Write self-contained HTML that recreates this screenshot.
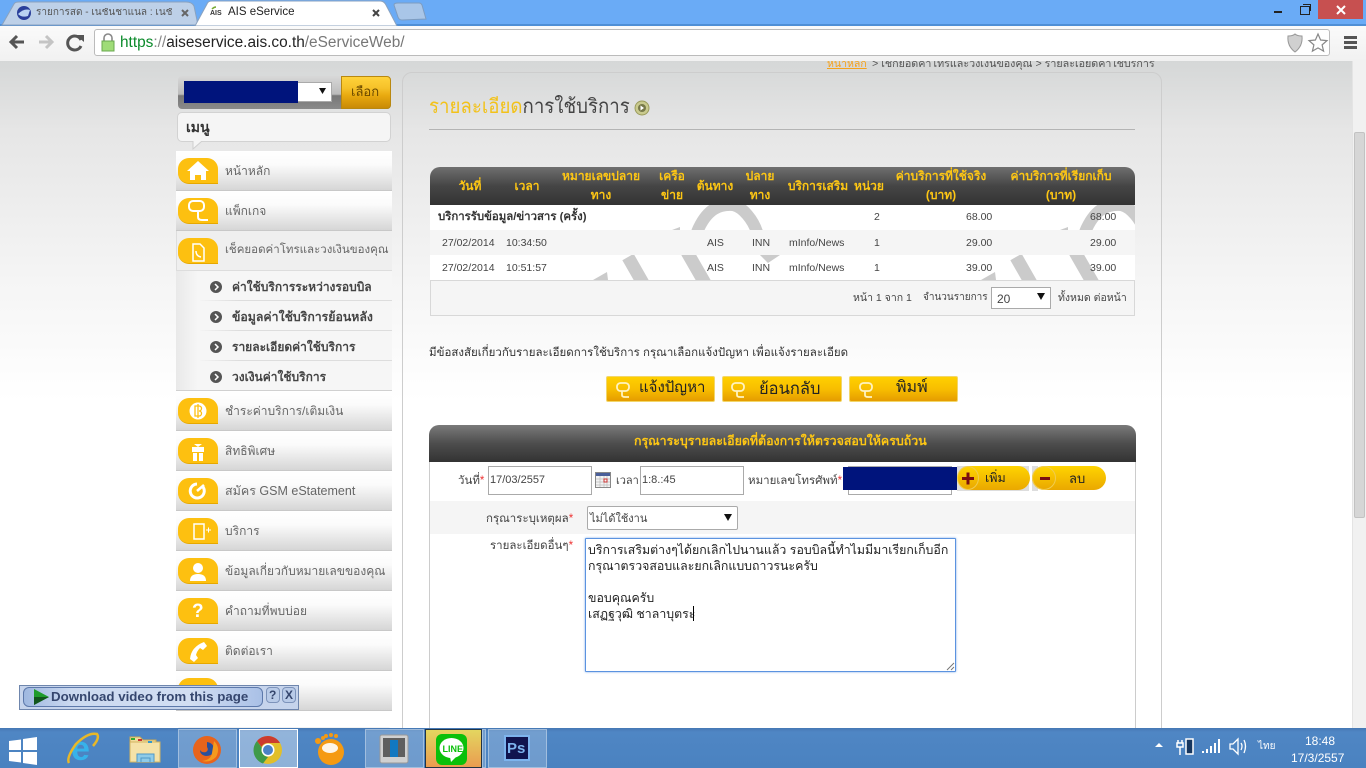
<!DOCTYPE html>
<html lang="th"><head><meta charset="utf-8"><title>AIS eService</title>
<style>
html,body{margin:0;padding:0;width:1366px;height:768px;overflow:hidden;background:#fff}
body{font-family:"Liberation Sans","Noto Sans CJK SC",sans-serif;position:relative;font-size:11px;color:#333}
div,span.a,svg.a{position:absolute}
.t{position:absolute;white-space:nowrap;line-height:1}
.mi{left:176px;width:216px;height:40px;background:linear-gradient(#fff 0,#fbfbfb 35%,#d6d6d6 100%);border-bottom:1px solid #c8c8c8;box-sizing:border-box}
.bub{left:178px;width:40px;height:26px;background:#fdc010;border-radius:11px 11px 0 11px;border-bottom:1px solid #e6a800;box-sizing:border-box}
.ml{left:225px;font-size:12px;color:#666}
.sl{left:232px;font-size:12px;color:#444;font-weight:bold}
.bul{left:210px;width:12px;height:12px;border-radius:50%;background:#555;color:#fff}
.sep{left:200px;width:192px;height:1px;background:linear-gradient(90deg,#f4f4f4,#ddd 20%,#ddd)}
.th{color:#fdc614;font-weight:bold;font-size:12px;text-align:center;line-height:19px;white-space:normal}
.td{font-size:10.5px;color:#444}
.btn{background:linear-gradient(#ffd000,#f8be00 50%,#e59c00);border:1px solid #f2d66a;box-sizing:border-box;border-radius:2px;color:#222;font-size:14px}
.inp{background:#fff;border:1px solid #aaa;box-sizing:border-box}
.tbb{top:729px;height:39px;width:59px;box-sizing:border-box;border:1px solid rgba(255,255,255,.35);background:rgba(255,255,255,.2)}
</style></head><body>

<!-- Chrome frame -->
<div style="left:0;top:0;width:1366px;height:26px;background:#6aabf6"></div>
<div style="left:0;top:24px;width:1366px;height:2px;background:#4f8fd6"></div>
<svg class="a" style="left:0;top:0" width="440" height="27">
<path d="M2 25 L14 4 Q15 2 19 2 L186 2 Q192 2 194 6 L198 25Z" fill="#bdd0e8" stroke="#8aa2bf"/>
<path d="M195 26 L207 4 Q208 1 212 1 L380 1 Q384 1 386 5 L397 26Z" fill="#fff" stroke="#8aa2bf"/>
<path d="M394 5 Q394 3 398 3 L419 3 Q421 3 422 5 L426 19 L402 20 Q399 20 398 17Z" fill="#a9c6e8" stroke="#7d9cc0"/>
<circle cx="24" cy="13" r="7" fill="#2a3f9a"/><path d="M18 14 Q24 8 30 10 L28 16 Q22 18 18 14Z" fill="#b9d2f2"/>
<path d="M182 10 l6 6 m0 -6 l-6 6" stroke="#666" stroke-width="2"/>
<path d="M373 10 l6 6 m0 -6 l-6 6" stroke="#444" stroke-width="2"/>
<path d="M212 9 q2 -2 4 -2" stroke="#7a3" stroke-width="1.5" fill="none"/>
</svg>
<span class="t" style="left:36px;top:8px;font-size:10px;color:#555;width:138px;overflow:hidden">รายการสด - เนชั่นชาแนล : เนชั่</span>
<span class="t" style="left:210px;top:10px;font-size:7px;font-weight:bold;color:#333">AIS</span>
<span class="t" style="left:228px;top:7px;font-size:11.500px;color:#222">AIS eService</span>

<div style="left:0;top:26px;width:1366px;height:35px;background:linear-gradient(#fafafa,#f1f1f1);border-bottom:1px solid #a8a8a8"></div>
<svg class="a" style="left:0;top:26px" width="100" height="35">
<path d="M24 16 H12 M17 10 l-6 6 6 6" stroke="#555" stroke-width="3" fill="none"/>
<path d="M39 16 H51 M46 10 l6 6 -6 6" stroke="#c4c4c4" stroke-width="3" fill="none"/>
<path d="M81 14 A7 7 0 1 0 81 20" stroke="#555" stroke-width="3" fill="none"/><path d="M76 9 h8 v7z" fill="#555"/>
</svg>
<div style="left:94px;top:29px;width:1236px;height:27px;background:#fff;border:1px solid #bbb;border-radius:3px;box-sizing:border-box"></div>
<svg class="a" style="left:100px;top:33px" width="16" height="20"><path d="M4 8 V5 a4 4 0 0 1 8 0 v3" stroke="#888" stroke-width="1.6" fill="none"/><rect x="2" y="8" width="12" height="10" fill="#9fdc78" stroke="#6aa84f"/></svg>
<span class="t" style="left:120px;top:35px;font-size:15.400px"><span style="color:#0a8a2a">https</span><span style="color:#888">://</span><span style="color:#222">aiseservice.ais.co.th</span><span style="color:#777">/eServiceWeb/</span></span>
<svg class="a" style="left:1284px;top:32px" width="46" height="22">
<path d="M4 4 Q9 4 11 2 Q13 4 18 4 Q19 14 11 20 Q3 14 4 4Z" fill="#d0d0d0" stroke="#999"/>
<path d="M34 2 l2.6 6 6.400 .6 -4.900 4.300 1.500 6.300 -5.600 -3.300 -5.600 3.300 1.500 -6.300 -4.900 -4.300 6.400 -.6z" fill="#fff" stroke="#888" stroke-width="1.200"/>
</svg>
<div style="left:1344px;top:36px;width:13px;height:3px;background:#555"></div>
<div style="left:1344px;top:41px;width:13px;height:3px;background:#555"></div>
<div style="left:1344px;top:46px;width:13px;height:3px;background:#555"></div>
<div style="left:1274px;top:11px;width:8px;height:2px;background:#222"></div>
<div style="left:1300px;top:6px;width:8px;height:7px;border:1.5px solid #222;background:#6aabf6"></div>
<div style="left:1303px;top:4px;width:7px;height:6px;border:1.5px solid #222;border-bottom:0;border-left:0"></div>
<div style="left:1318px;top:0;width:45px;height:19px;background:#c75050"></div>
<svg class="a" style="left:1334px;top:4px" width="14" height="12"><path d="M3 2 l8 8 m0 -8 l-8 8" stroke="#fff" stroke-width="2"/></svg>

<!-- Page -->
<div style="left:0;top:61px;width:1352px;height:667px;background:linear-gradient(#d5d7d7 0,#e6e6e6 70px,#f5f5f5 220px,#fff 340px,#fff 100%)"></div>
<div style="left:1352px;top:61px;width:14px;height:667px;background:#f1f1f1;border-left:1px solid #e4e4e4;box-sizing:border-box"></div>
<div style="left:1354px;top:132px;width:11px;height:386px;background:#d6d6d6;border:1px solid #c2c2c2;box-sizing:border-box;border-radius:2px"></div>

<!-- Main panel -->
<div style="left:402px;top:72px;width:760px;height:670px;border:1px solid #cdcdcd;border-radius:10px;box-sizing:border-box"></div>
<div style="left:820px;top:61px;width:345px;height:10px;overflow:hidden">
<span class="t" style="left:7px;top:-2px;font-size:10.500px;color:#f5a21b;text-decoration:underline">หน้าหลัก</span>
<span class="t" style="left:52px;top:-2px;font-size:10.700px;color:#555">&gt;  เช็กยอดค่าโทรและวงเงินของคุณ  &gt;  รายละเอียดค่าใช้บริการ</span>
</div>
<span class="t" style="left:429px;top:97px;font-size:20px;color:#f2c21a;transform:scaleX(.933);transform-origin:0 0">รายละเอียด<span style="color:#444">การใช้บริการ</span></span>
<svg class="a" style="left:634px;top:100px" width="16" height="16"><circle cx="8" cy="8" r="7" fill="#c9ca8e" stroke="#999a5a"/><circle cx="8" cy="8" r="4" fill="#77794a"/><path d="M6.500 5.500 l3.500 2.500 -3.500 2.500z" fill="#fff"/></svg>
<div style="left:429px;top:129px;width:706px;height:1px;background:#b4b4b4"></div>

<!-- Sidebar select -->
<div style="left:178px;top:76px;width:213px;height:33px;border-radius:4px;background:linear-gradient(#d8d8d8,#bbb 55%,#777 60%,#8a8a8a);box-sizing:border-box"></div>
<div style="left:184px;top:82px;width:148px;height:20px;background:#fff;border:1px solid #aaa;box-sizing:border-box"></div>
<div style="left:184px;top:81px;width:114px;height:22px;background:#00147c"></div>
<svg class="a" style="left:319px;top:88px" width="7" height="6"><path d="M0 0 H7 L3.500 6z" fill="#111"/></svg>
<div style="left:341px;top:76px;width:50px;height:33px;border-radius:0 4px 4px 0;background:linear-gradient(#ffd23a,#f6c22a 35%,#e8a90f 60%,#c98a06);border:1px solid #b98810;box-sizing:border-box"></div>
<span class="t" style="left:351px;top:85px;font-size:13px;color:#6b4a00">เลือก</span>
<div style="left:177px;top:112px;width:214px;height:30px;background:#f5f5f5;border:1px solid #d2d2d2;border-radius:5px;box-sizing:border-box"></div>
<svg class="a" style="left:192px;top:141px" width="12" height="9"><path d="M1 0 V8 L10 0" fill="#f5f5f5" stroke="#cfcfcf"/></svg>
<span class="t" style="left:186px;top:120px;font-size:14px;color:#333;font-weight:bold">เมนู</span>

<!-- Menu -->
<div class="mi" style="top:151px"></div><div class="mi" style="top:191px"></div>
<div class="mi" style="top:231px;background:#efefef;border-left:1px solid #ddd;border-bottom-color:#ddd"></div>
<div style="left:176px;top:271px;width:216px;height:120px;background:linear-gradient(90deg,#e9e9e9,#f6f6f6 22px);border-bottom:1px solid #d0d0d0;box-sizing:border-box"></div>
<div class="mi" style="top:391px"></div><div class="mi" style="top:431px"></div><div class="mi" style="top:471px"></div><div class="mi" style="top:511px"></div><div class="mi" style="top:551px"></div><div class="mi" style="top:591px"></div><div class="mi" style="top:631px"></div><div class="mi" style="top:671px"></div>
<div class="bub" style="top:158px"></div><div class="bub" style="top:198px"></div><div class="bub" style="top:238px"></div><div class="bub" style="top:398px"></div><div class="bub" style="top:438px"></div><div class="bub" style="top:478px"></div><div class="bub" style="top:518px"></div><div class="bub" style="top:558px"></div><div class="bub" style="top:598px"></div><div class="bub" style="top:638px"></div><div class="bub" style="top:678px"></div>
<span class="t ml" style="top:165px;font-size:12px">หน้าหลัก</span>
<span class="t ml" style="top:205px">แพ็กเกจ</span>
<span class="t ml" style="top:245px;font-size:11.500px">เช็คยอดค่าโทรและวงเงินของคุณ</span>
<span class="t ml" style="top:405px">ชำระค่าบริการ/เติมเงิน</span>
<span class="t ml" style="top:445px">สิทธิพิเศษ</span>
<span class="t ml" style="top:485px;font-size:12.500px">สมัคร GSM eStatement</span>
<span class="t ml" style="top:525px">บริการ</span>
<span class="t ml" style="top:565px">ข้อมูลเกี่ยวกับหมายเลขของคุณ</span>
<span class="t ml" style="top:605px">คำถามที่พบบ่อย</span>
<span class="t ml" style="top:645px">ติดต่อเรา</span>
<svg class="a" style="left:178px;top:151px" width="40" height="540" fill="#fff">
<path d="M20 10 L31 20 H28 V29 H23 V24 H17 V29 H12 V20 H9Z"/>
<rect x="11" y="50" width="15" height="10" rx="4" fill="none" stroke="#fff" stroke-width="2"/><path d="M20 60 v6 q0 3 4 3 h6" fill="none" stroke="#fff" stroke-width="2"/>
<path d="M15 93 h7 l4 4 v13 h-11z" fill="none" stroke="#fff" stroke-width="1.500"/><path d="M18 100 q0 5 5 6" fill="none" stroke="#fff" stroke-width="1.500"/>
<circle cx="20" cy="260" r="8.500"/><path d="M17 255 h4 a2.500 2.500 0 0 1 0 5 a2.500 2.500 0 0 1 0 5 h-4z M20 253v14" fill="none" stroke="#fdc010" stroke-width="1.300"/>
<path d="M14 296 h12 v5 h-12z M15 302 h4 v8 h-4z M21 302 h4 v8 h-4z M16 293 l4 3 4 -3"/>
<path d="M25 336 A7 7 0 1 1 19 333" fill="none" stroke="#fff" stroke-width="3"/><path d="M19 340 l7 -6" stroke="#fff" stroke-width="2.500"/>
<rect x="16" y="373" width="10" height="15" fill="none" stroke="#fff" stroke-width="1.500"/><path d="M28 379 h5 m-2.500 -2.500 v5" stroke="#fff"/>
<circle cx="20" cy="417" r="5"/><path d="M12 430 q0 -7 8 -7 q8 0 8 7z"/>
<text x="14" y="466" font-size="19" font-weight="bold" font-family="Liberation Sans">?</text>
<path d="M12 508 Q13 496 26 491 L29 495 L25 499 L22 497 Q19 500 18 504 L20 507 L16 511Z"/>
</svg>
<span class="t sl" style="top:281px">ค่าใช้บริการระหว่างรอบบิล</span>
<span class="t sl" style="top:311px;font-size:12.300px">ข้อมูลค่าใช้บริการย้อนหลัง</span>
<span class="t sl" style="top:341px">รายละเอียดค่าใช้บริการ</span>
<span class="t sl" style="top:371px">วงเงินค่าใช้บริการ</span>
<div class="bul" style="top:281px"></div><div class="bul" style="top:311px"></div><div class="bul" style="top:341px"></div><div class="bul" style="top:371px"></div>
<svg class="a" style="left:210px;top:281px" width="12" height="102"><path d="M5 3 l3 3 -3 3M5 33 l3 3 -3 3M5 63 l3 3 -3 3M5 93 l3 3 -3 3" fill="none" stroke="#fff" stroke-width="1.500"/></svg>
<div class="sep" style="top:300px"></div><div class="sep" style="top:330px"></div><div class="sep" style="top:360px"></div>
<div style="left:177px;top:727px;width:214px;height:3px;background:#f2f2f2;border-radius:6px 6px 0 0"></div>

<!-- Table -->
<div style="left:430px;top:167px;width:705px;height:38px;border-radius:10px 10px 0 0;background:linear-gradient(#6f6f6f,#454545 50%,#333)"></div>
<div style="left:430px;top:205px;width:705px;height:75px;background:#fff"></div>
<svg class="a" style="left:430px;top:205px" width="705" height="75">
<path d="M267 27 C277 3 290 -1 303 0 C313 2 323 15 327 27" fill="none" stroke="#cbcbcb" stroke-width="12"/>
<path d="M257 47 L276 80 M198 52 L214 80" fill="none" stroke="#cbcbcb" stroke-width="13"/>
<path d="M163 75 L177 67 L178 75Z M242 25 L250 22 L250 25Z M330 50 L350 50 L338 58Z" fill="#cbcbcb"/>
<g transform="translate(388 0)"><path d="M267 27 C277 3 290 -1 303 0 C313 2 323 15 327 27" fill="none" stroke="#cbcbcb" stroke-width="12"/>
<path d="M257 47 L276 80 M198 52 L214 80" fill="none" stroke="#cbcbcb" stroke-width="13"/>
<path d="M163 75 L177 67 L178 75Z M242 25 L250 22 L250 25Z" fill="#cbcbcb"/></g>
</svg>
<div style="left:430px;top:230px;width:705px;height:25px;background:#f5f5f5"></div>
<div style="left:430px;top:280px;width:705px;height:36px;background:#f5f5f5;border:1px solid #d8d8d8;box-sizing:border-box"></div>
<div class="t th" style="left:455px;top:177px;width:30px">วันที่</div>
<div class="t th" style="left:510px;top:177px;width:34px">เวลา</div>
<div class="t th" style="left:558px;top:167px;width:86px">หมายเลขปลาย<br>ทาง</div>
<div class="t th" style="left:655px;top:167px;width:34px">เครือ<br>ข่าย</div>
<div class="t th" style="left:692px;top:177px;width:46px">ต้นทาง</div>
<div class="t th" style="left:740px;top:167px;width:40px">ปลาย<br>ทาง</div>
<div class="t th" style="left:784px;top:177px;width:68px">บริการเสริม</div>
<div class="t th" style="left:851px;top:177px;width:36px">หน่วย</div>
<div class="t th" style="left:890px;top:167px;width:102px">ค่าบริการที่ใช้จริง<br>(บาท)</div>
<div class="t th" style="left:1000px;top:167px;width:122px">ค่าบริการที่เรียกเก็บ<br>(บาท)</div>
<span class="t td" style="left:438px;top:212px;font-weight:bold;color:#333;font-size:11.400px">บริการรับข้อมูล/ข่าวสาร (ครั้ง)</span>
<span class="t td" style="left:874px;top:212px">2</span><span class="t td" style="left:966px;top:212px">68.00</span><span class="t td" style="left:1090px;top:212px">68.00</span>
<span class="t td" style="left:442px;top:238px">27/02/2014</span><span class="t td" style="left:506px;top:238px">10:34:50</span><span class="t td" style="left:707px;top:238px">AIS</span><span class="t td" style="left:752px;top:238px">INN</span><span class="t td" style="left:789px;top:238px">mInfo/News</span><span class="t td" style="left:874px;top:238px">1</span><span class="t td" style="left:966px;top:238px">29.00</span><span class="t td" style="left:1090px;top:238px">29.00</span>
<span class="t td" style="left:442px;top:263px">27/02/2014</span><span class="t td" style="left:506px;top:263px">10:51:57</span><span class="t td" style="left:707px;top:263px">AIS</span><span class="t td" style="left:752px;top:263px">INN</span><span class="t td" style="left:789px;top:263px">mInfo/News</span><span class="t td" style="left:874px;top:263px">1</span><span class="t td" style="left:966px;top:263px">39.00</span><span class="t td" style="left:1090px;top:263px">39.00</span>
<span class="t td" style="left:853px;top:293px">หน้า 1 จาก 1</span>
<span class="t td" style="left:923px;top:293px;font-size:10px">จำนวนรายการ</span>
<div class="inp" style="left:991px;top:287px;width:60px;height:22px"></div>
<span class="t td" style="left:997px;top:293px;font-size:12px">20</span>
<svg class="a" style="left:1037px;top:293px" width="9" height="7"><path d="M0 0 H8 L4 7z" fill="#111"/></svg>
<span class="t td" style="left:1058px;top:293px">ทั้งหมด ต่อหน้า</span>

<span class="t" style="left:429px;top:348px;font-size:11.500px;color:#333">มีข้อสงสัยเกี่ยวกับรายละเอียดการใช้บริการ กรุณาเลือกแจ้งปัญหา เพื่อแจ้งรายละเอียด</span>

<!-- Buttons -->
<div class="btn" style="left:606px;top:376px;width:109px;height:26px"></div>
<div class="btn" style="left:722px;top:376px;width:120px;height:26px"></div>
<div class="btn" style="left:849px;top:376px;width:109px;height:26px"></div>
<div class="btn" style="left:735px;top:699px;width:93px;height:26px"></div>
<span class="t" style="left:639px;top:380px;font-size:15px;color:#222">แจ้งปัญหา</span>
<span class="t" style="left:759px;top:381px;font-size:16.500px;color:#222">ย้อนกลับ</span>
<span class="t" style="left:896px;top:380px;font-size:16px;color:#222">พิมพ์</span>
<span class="t" style="left:771px;top:704px;font-size:15px;color:#222">ตกลง</span>
<svg class="a" style="left:600px;top:370px" width="380" height="360" fill="none" stroke="#fff3c0" stroke-width="1.800">
<g><rect x="17" y="13" width="12" height="8" rx="3.500"/><path d="M22 21 v4 q0 2 3 2 h4"/></g>
<g transform="translate(115 0)"><rect x="17" y="13" width="12" height="8" rx="3.500"/><path d="M22 21 v4 q0 2 3 2 h4"/></g>
<g transform="translate(243 0)"><rect x="17" y="13" width="12" height="8" rx="3.500"/><path d="M22 21 v4 q0 2 3 2 h4"/></g>
<g transform="translate(128 323)"><rect x="17" y="13" width="12" height="8" rx="3.500"/><path d="M22 21 v4 q0 2 3 2 h4"/></g>
</svg>

<!-- Form -->
<div style="left:429px;top:425px;width:707px;height:37px;border-radius:10px 10px 0 0;background:linear-gradient(#7a7a7a,#4d4d4d 50%,#333)"></div>
<span class="t" style="left:634px;top:435px;font-size:12.400px;font-weight:bold;color:#fdc614">กรุณาระบุรายละเอียดที่ต้องการให้ตรวจสอบให้ครบถ้วน</span>
<div style="left:429px;top:462px;width:707px;height:266px;background:#fff;border-left:1px solid #ccc;border-right:1px solid #ccc;box-sizing:border-box"></div>
<div style="left:430px;top:501px;width:705px;height:33px;background:#f5f5f5"></div>
<span class="t" style="left:458px;top:476px;font-size:11.500px;color:#444">วันที่<span style="color:#e33">*</span></span>
<div class="inp" style="left:488px;top:466px;width:104px;height:29px"></div>
<span class="t td" style="left:490px;top:475px;font-size:11px">17/03/2557</span>
<svg class="a" style="left:595px;top:472px" width="16" height="16"><rect x=".5" y=".5" width="15" height="15" fill="#f4f4f4" stroke="#888"/><rect x="1" y="1" width="14" height="3" fill="#4a5f9a"/><path d="M1 7H15M1 10H15M1 13H15M5 4V15M9 4V15M12 4V15" stroke="#bbb" stroke-width=".7"/><rect x="9" y="7" width="3" height="3" fill="none" stroke="#c33"/></svg>
<span class="t" style="left:616px;top:476px;font-size:11px;color:#444">เวลา</span>
<div class="inp" style="left:640px;top:466px;width:104px;height:29px"></div>
<span class="t td" style="left:642px;top:475px;font-size:11px">1:8.:45</span>
<span class="t" style="left:748px;top:476px;font-size:11.500px;color:#444">หมายเลขโทรศัพท์<span style="color:#e33">*</span></span>
<div class="inp" style="left:848px;top:466px;width:104px;height:29px"></div>
<div style="left:843px;top:467px;width:114px;height:23px;background:#00147c"></div>
<div style="left:957px;top:466px;width:72px;height:25px;background:#ddd"></div>
<div style="left:1032px;top:466px;width:6px;height:25px;background:#ddd"></div>
<div style="left:958px;top:466px;width:72px;height:24px;border-radius:12px;background:linear-gradient(#ffd400,#eaa800)"></div>
<div style="left:1032px;top:466px;width:74px;height:24px;border-radius:12px;background:linear-gradient(#ffd400,#eaa800)"></div>
<div style="left:957px;top:466px;width:22px;height:24px;border-radius:50%;background:linear-gradient(#ffd400,#eaa800);border:1px solid #f0cc50;box-sizing:border-box"></div>
<div style="left:1032px;top:466px;width:24px;height:24px;border-radius:50%;background:linear-gradient(#ffd400,#eaa800);border:1px solid #f0cc50;box-sizing:border-box"></div>
<svg class="a" style="left:957px;top:466px" width="100" height="24"><path d="M5 12.500h12M11 6.500v12" stroke="#7a0f10" stroke-width="3"/><path d="M83 12.500h10" stroke="#7a0f10" stroke-width="3"/></svg>
<span class="t" style="left:985px;top:472px;font-size:12.500px;color:#222">เพิ่ม</span>
<span class="t" style="left:1069px;top:472px;font-size:13px;color:#222">ลบ</span>

<span class="t" style="left:486px;top:514px;font-size:11.500px;color:#444">กรุณาระบุเหตุผล<span style="color:#e33">*</span></span>
<div class="inp" style="left:587px;top:506px;width:151px;height:24px;border-radius:2px"></div>
<span class="t td" style="left:590px;top:514px;font-size:11px">ไม่ได้ใช้งาน</span>
<svg class="a" style="left:724px;top:514px" width="9" height="7"><path d="M0 0 H8 L4 7z" fill="#111"/></svg>
<span class="t" style="left:490px;top:541px;font-size:11.500px;color:#444">รายละเอียดอื่นๆ<span style="color:#e33">*</span></span>
<div style="left:585px;top:538px;width:371px;height:134px;background:#fff;border:1px solid #5b93e0;box-shadow:0 0 2px #7fa9e6;box-sizing:border-box;border-radius:1px"></div>
<div class="t" style="left:588px;top:542px;font-size:12.360px;color:#222;line-height:16px;white-space:pre">บริการเสริมต่างๆได้ยกเลิกไปนานแล้ว รอบบิลนี้ทำไมมีมาเรียกเก็บอีก
กรุณาตรวจสอบและยกเลิกแบบถาวรนะครับ

ขอบคุณครับ
เสฏฐวุฒิ ชาลาบุตระ</div>
<div style="left:693px;top:606px;width:1px;height:15px;background:#000"></div>
<svg class="a" style="left:946px;top:662px" width="9" height="9"><path d="M1 8 L8 1M5 8 L8 5" stroke="#777"/></svg>

<!-- Download bar -->
<div style="left:19px;top:685px;width:280px;height:25px;background:#c6d4ec;border:1px solid #6f86ad;box-sizing:border-box"></div>
<div style="left:23px;top:687px;width:240px;height:20px;border-radius:6px;background:linear-gradient(90deg,#9fb8e0,#cbd9f0 20%,#d2def2 70%,#a9c0e6);border:1px solid #5d79ab;box-sizing:border-box"></div>
<svg class="a" style="left:33px;top:688px" width="18" height="18"><path d="M1 1 L16 9 L1 17Z" fill="#1f9c2b"/><path d="M1 9 L16 9 L1 17Z" fill="#12561c"/></svg>
<span class="t" style="left:51px;top:690px;font-size:13.300px;font-weight:bold;color:#35466e">Download video from this page</span>
<div style="left:266px;top:687px;width:14px;height:16px;border-radius:4px;background:#b9cbe8;border:1px solid #7d93ba;box-sizing:border-box"></div>
<div style="left:282px;top:687px;width:14px;height:16px;border-radius:4px;background:#b9cbe8;border:1px solid #7d93ba;box-sizing:border-box"></div>
<span class="t" style="left:269px;top:689px;font-size:12px;font-weight:bold;color:#35466e">?</span>
<span class="t" style="left:285px;top:689px;font-size:12px;font-weight:bold;color:#35466e">X</span>

<!-- Taskbar -->
<div style="left:0;top:728px;width:1366px;height:40px;background:linear-gradient(#4678b4,#4f86c4 10%,#4a82c0)"></div>
<svg class="a" style="left:8px;top:737px" width="30" height="28" fill="#fff"><path d="M1 4 L13 2.500V13H1Z M15 2 L29 0 V13H15Z M1 15H13V25.500L1 24Z M15 15H29V28L15 26Z"/></svg>
<svg class="a" style="left:66px;top:732px" width="34" height="34">
<text x="5" y="28" font-size="34" font-family="Liberation Sans" fill="#37b2ea" font-weight="bold">e</text>
<path d="M3 31 Q0 26 10 12 Q22 0 31 2 Q34 6 27 14" fill="none" stroke="#e8b828" stroke-width="2.500"/></svg>
<svg class="a" style="left:128px;top:734px" width="34" height="30"><path d="M2 3 h10 l3 3 h13 v6 H2Z" fill="#f2dc9c" stroke="#c9a850"/><rect x="2" y="8" width="30" height="20" fill="#f5e2a8" stroke="#d3b460"/><rect x="3" y="4" width="4" height="2" fill="#3a3"/><rect x="10" y="5" width="4" height="2" fill="#c33"/><rect x="20" y="7" width="4" height="2" fill="#39c"/><path d="M9 28 v-8 h17 v8 M13 28 v-4 h9 v4" fill="#8fcbe8" stroke="#4f98c8"/></svg>
<div class="tbb" style="left:178px"></div>
<div class="tbb" style="left:239px;background:rgba(255,255,255,.38);border-color:#fff"></div>
<div class="tbb" style="left:365px"></div>
<div class="tbb" style="left:425px;width:57px;border-color:#234;background:linear-gradient(#e3d660,#ea9c50)"></div>
<div class="tbb" style="left:482px;width:4px"></div>
<div class="tbb" style="left:488px"></div>
<svg class="a" style="left:192px;top:735px" width="30" height="30"><circle cx="15" cy="15" r="14" fill="#e8641c"/><path d="M15 7 Q22 8 22 15 Q21 21 14 21 Q8 20 8 15 Q10 18 14 17 Q17 15 15 12Z" fill="#2a4f9c"/><path d="M22 6 Q29 13 24 22 Q18 28 10 26 Q19 25 20 18Z" fill="#f59a1e"/></svg>
<svg class="a" style="left:253px;top:735px" width="30" height="30"><circle cx="15" cy="15" r="14" fill="#e2bf2a"/><path d="M15 1 A14 14 0 0 1 27 8 H15 A7 7 0 0 0 8.500 12 L4 6 A14 14 0 0 1 15 1Z" fill="#cc3b2e"/><path d="M4 6 L9 13 A7 7 0 0 0 15 22 L10 28.500 A14 14 0 0 1 4 6Z" fill="#3f9a48"/><circle cx="15" cy="15" r="6.500" fill="#fff"/><circle cx="15" cy="15" r="5" fill="#4a82c8"/></svg>
<svg class="a" style="left:314px;top:733px" width="34" height="32"><circle cx="17" cy="19" r="13" fill="#f59a12"/><ellipse cx="16" cy="15" rx="8" ry="5" fill="#fff" opacity=".9"/><circle cx="4" cy="8" r="3" fill="#f59a12"/><circle cx="12" cy="3" r="2" fill="#f59a12"/><circle cx="17" cy="2" r="2" fill="#f59a12"/><circle cx="22" cy="3" r="2" fill="#f59a12"/><circle cx="9" cy="5" r="2" fill="#f59a12"/></svg>
<svg class="a" style="left:379px;top:734px" width="30" height="30"><rect x="1" y="1" width="28" height="28" rx="2" fill="#d0d0d0" stroke="#999"/><rect x="4" y="4" width="22" height="19" fill="#5f5f5f"/><rect x="11" y="6" width="8" height="17" fill="#1278c0"/></svg>
<svg class="a" style="left:436px;top:734px" width="32" height="32"><rect width="31" height="31" rx="6" fill="#0ac00a"/><ellipse cx="15.500" cy="14" rx="12" ry="10" fill="#fff"/><path d="M14 23 l1 5 5 -5z" fill="#fff"/><text x="6.500" y="18" font-size="9" font-weight="bold" font-family="Liberation Sans" fill="#0ac00a">LINE</text></svg>
<div style="left:504px;top:735px;width:26px;height:26px;background:#10144e;border:2px solid #7db4ee;box-sizing:border-box"></div>
<span class="t" style="left:507px;top:741px;font-size:15px;font-weight:bold;color:#7db4ee">Ps</span>
<svg class="a" style="left:1152px;top:735px" width="105" height="26" fill="none" stroke="#fff">
<path d="M3 12 L7 8 L11 12Z" fill="#fff" stroke="none"/>
<path d="M26 5v3M30 5v3M25 8h6v4h-6zM28 12v8" stroke-width="1.500"/><rect x="34" y="4" width="7" height="15" fill="#16365f" stroke-width="1.500"/>
<path d="M50 18h2V16h-2zM54 18h2V14h-2zM58 18h2V11h-2zM62 18h2V8h-2zM66 18h2V4h-2z" fill="#fff" stroke="none"/>
<path d="M78 9h3l5 -5v15l-5 -5h-3z" stroke-width="1.300"/><path d="M89 8q2 3 0 7M92 5q3 6 0 13" stroke-width="1.300"/>
</svg>
<span class="t" style="left:1258px;top:742px;font-size:10px;color:#fff">ไทย</span>
<span class="t" style="left:1305px;top:735px;font-size:12px;color:#fff">18:48</span>
<span class="t" style="left:1291px;top:752px;font-size:12px;color:#fff">17/3/2557</span>
</body></html>
